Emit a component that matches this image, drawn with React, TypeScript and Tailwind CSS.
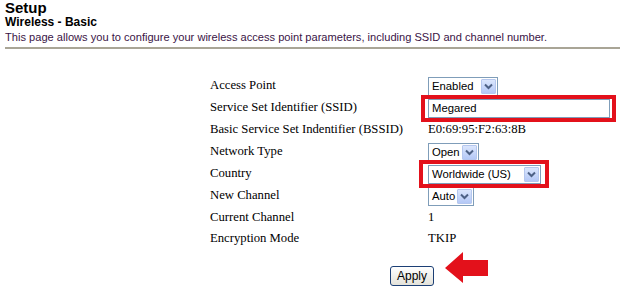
import React from "react";

function Arrow() {
  return (
    <span className="w-[15px] h-[15px] ml-auto bg-gradient-to-b from-[#dbe6fd] to-[#b4c8f6] border border-[#b5c7ee] rounded-[1px] flex items-center justify-center">
      <svg width="9" height="7" viewBox="0 0 9 7">
        <path d="M1 1.5 L4.5 5 L8 1.5" stroke="#4d6185" strokeWidth="2" fill="none" />
      </svg>
    </span>
  );
}

function Select({ value, w }: { value: string; w: string }) {
  return (
    <div className={`${w} h-[19px] border border-[#7f9db9] bg-white flex items-center pl-[3px] pr-[1px] text-[11.3px] text-black font-['Liberation_Sans',Arial,sans-serif]`}>
      <span>{value}</span>
      <Arrow />
    </div>
  );
}

const serif = "flex items-center text-[12.7px] text-black font-['Liberation_Serif','Times_New_Roman',serif]";

function Label({ children, h = "h-[22px]" }: { children: React.ReactNode; h?: string }) {
  return <div className={`${h} ${serif}`}>{children}</div>;
}

export default function App() {
  return (
    <div className="w-[620px] h-[288px] bg-white relative overflow-hidden font-['Liberation_Sans',Arial,sans-serif]">
      <div className="pl-[5px]">
        <div className="text-[15px] font-bold leading-[15px] text-black">Setup</div>
        <div className="text-[12px] font-bold leading-[13px] text-black mt-[1px]">Wireless - Basic</div>
        <div className="text-[11.1px] leading-[13px] text-[#3a1446] mt-[2px]">
          This page allows you to configure your wireless access point parameters, including SSID and channel number.
        </div>
      </div>
      <div className="ml-[5px] mt-[3px] h-[2px] bg-[#a9a596]" />
      <div className="ml-[210px] w-[404px] mt-[26px]">
        <div className="grid grid-cols-[218px_1fr]">
          <Label>Access Point</Label>
          <Label><Select value="Enabled" w="w-[70px]" /></Label>
          <Label>Service Set Identifier (SSID)</Label>
          <Label>
            <div className="relative">
              <div className="w-[182px] h-[19px] border border-[#7f9db9] bg-white flex items-center pl-[3px] text-[11.3px] font-['Liberation_Sans',Arial,sans-serif]">Megared</div>
              <span className="absolute left-[-7px] right-[-6px] top-[-4px] bottom-[-4px] border-[4px] border-[#e3111b]" />
            </div>
          </Label>
          <Label>Basic Service Set Indentifier (BSSID)</Label>
          <Label>E0:69:95:F2:63:8B</Label>
          <Label>Network Type</Label>
          <Label><Select value="Open" w="w-[51px]" /></Label>
          <Label>Country</Label>
          <Label>
            <div className="relative">
              <Select value="Worldwide (US)" w="w-[113px]" />
              <span className="absolute left-[-9px] right-[-8px] top-[-5px] bottom-[-4px] border-[4px] border-[#e3111b]" />
            </div>
          </Label>
          <Label>New Channel</Label>
          <Label><Select value="Auto" w="w-[46px]" /></Label>
          <Label h="h-[21px]">Current Channel</Label>
          <Label h="h-[21px]">1</Label>
          <Label h="h-[21px]">Encryption Mode</Label>
          <Label h="h-[21px]">TKIP</Label>
        </div>
        <div className="flex justify-center mt-[17px]">
          <button className="h-[20px] px-[6px] rounded-[3px] border border-[#1c3f75] bg-gradient-to-b from-white to-[#e3e2da] text-[12px] text-black font-['Liberation_Sans',Arial,sans-serif]">Apply</button>
        </div>
      </div>
      <svg className="absolute left-[444px] top-[251px]" width="46" height="33" viewBox="0 0 46 33">
        <polygon points="1,17 19,1 19,9 44,9 44,25 19,25 19,32" fill="#e3111b" />
      </svg>
    </div>
  );
}
